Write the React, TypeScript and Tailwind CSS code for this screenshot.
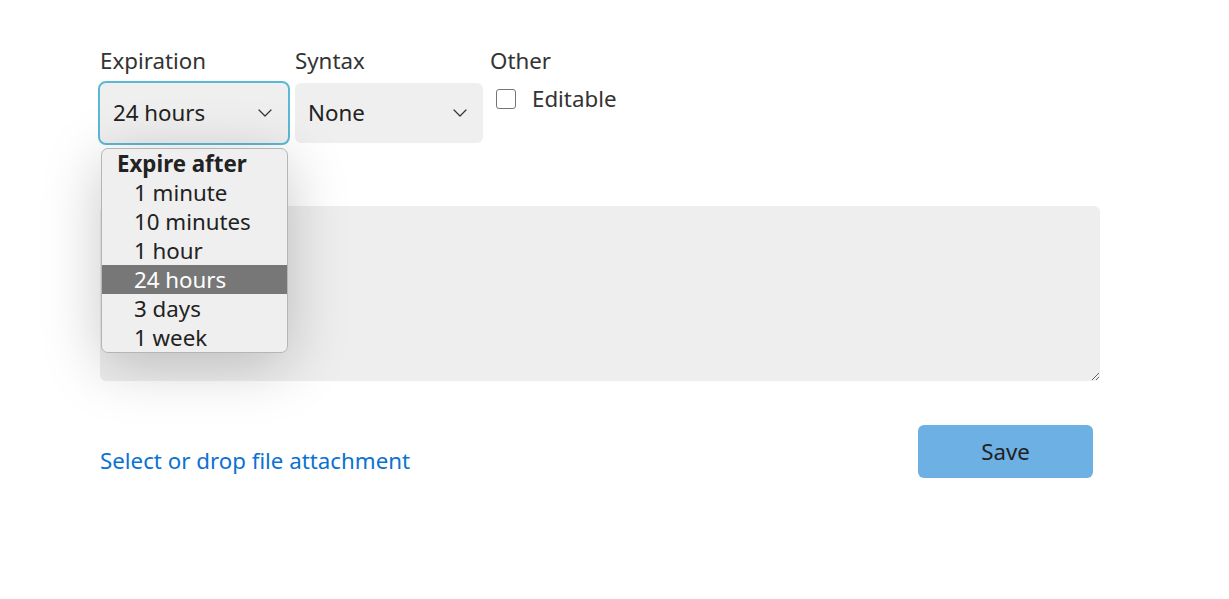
import React from 'react';

const Chevron = () => (
  <svg width="14" height="8" viewBox="0 0 14 8" fill="none" className="shrink-0">
    <path d="M1 1l6 6 6-6" stroke="#333" strokeWidth="1.2" strokeLinecap="round" strokeLinejoin="round" />
  </svg>
);

const options = ['1 minute', '10 minutes', '1 hour', '24 hours', '3 days', '1 week'];

export default function App() {
  return (
    <div className="min-h-screen bg-white text-[#222] font-['Noto_Sans','Open_Sans',sans-serif] text-[22.3px]">
      <div className="pl-[100px] pt-[46px] w-[1100px]">
        <div className="flex gap-[7px]">
          <div className="w-[188px]">
            <div className="leading-[30px] text-[#333]">Expiration</div>
            <div className="relative mt-[7px]">
              <div className="h-[60px] rounded-[6px] bg-[#efefef] outline-2 outline-[#5bb9d5] flex items-center justify-between pl-[13px] pr-[16px]">
                <span>24 hours</span>
                <Chevron />
              </div>
              <div className="absolute left-[1px] top-[65px] w-[187px] z-10 rounded-[7px] border border-[#b5b5b5] bg-[#efefef] shadow-[0_12px_60px_rgba(0,0,0,0.22)] overflow-hidden">
                <div className="h-[29px] leading-[29px] pl-[15px] font-bold">Expire after</div>
                {options.map(o => (
                  <div
                    key={o}
                    className={`h-[29px] leading-[29px] pl-[32px] ${o === '24 hours' ? 'bg-[#777777] text-white' : ''}`}
                  >
                    {o}
                  </div>
                ))}
              </div>
            </div>
          </div>

          <div className="w-[188px]">
            <div className="leading-[30px] text-[#333]">Syntax</div>
            <div className="mt-[7px] h-[60px] rounded-[6px] bg-[#efefef] flex items-center justify-between pl-[13px] pr-[16px]">
              <span>None</span>
              <Chevron />
            </div>
          </div>

          <div>
            <div className="leading-[30px] text-[#333]">Other</div>
            <label className="mt-[7px] h-8 flex items-center gap-[16px] pl-[6px]">
              <span className="w-[20px] h-[20px] rounded-[3px] border border-[#767676] bg-white" />
              <span className="text-[#333]">Editable</span>
            </label>
          </div>
        </div>

        <textarea className="block mt-[63px] w-[1000px] h-[175px] rounded-[6px] bg-[#eeeeee] resize-y outline-none" />

        <div className="flex justify-between items-start mt-[44px] pr-[7px]">
          <a className="mt-[21px] leading-[30px] text-[#0b72d2] cursor-pointer">Select or drop file attachment</a>
          <button className="w-[175px] h-[53px] rounded-[6px] bg-[#6cb0e4] text-[#222]">Save</button>
        </div>
      </div>
    </div>
  );
}
